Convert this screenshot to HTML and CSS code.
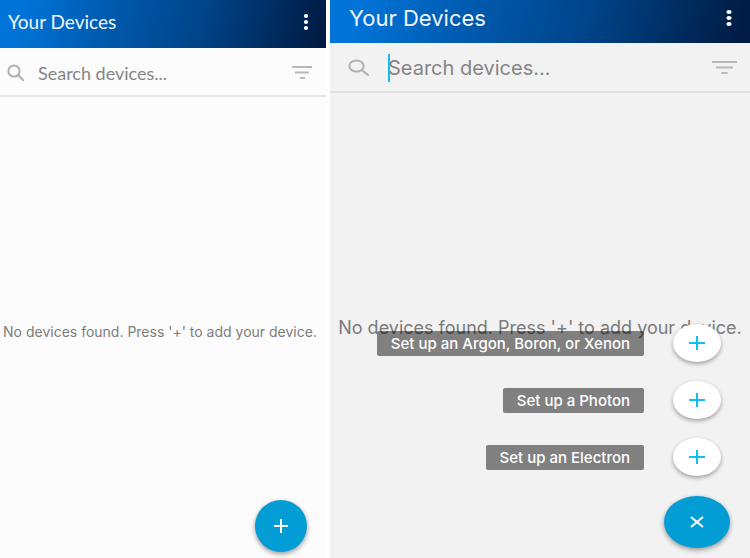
FILE: index.html
```html
<!DOCTYPE html>
<html lang="en">
<head>
<meta charset="utf-8">
<title>Your Devices</title>
<link rel="stylesheet" href="styles.css">
</head>
<body>
<main class="screens">
  <section class="screen">
    <header class="bar">
      <h1 class="title">Your Devices</h1>
      <button class="icon-button" aria-label="More options"><svg width="6" height="18" viewBox="0 0 6 18" fill="#fff"><circle cx="3" cy="3" r="2.1"/><circle cx="3" cy="9" r="2.1"/><circle cx="3" cy="15" r="2.1"/></svg></button>
    </header>
    <div class="search">
      <svg class="glass" width="18" height="18" viewBox="0 0 18 18" fill="none" stroke="#b0b0b0" stroke-width="2"><circle cx="7" cy="7" r="5.6"/><path d="M11 11l5.800 5.800"/></svg>
      <div class="field"><input type="text" placeholder="Search devices..." aria-label="Search devices"></div>
      <button class="icon-button" aria-label="Filter"><svg width="20" height="14" viewBox="0 0 20 14" fill="#b8b8b8"><path d="M0 0h20v2H0zM3 5.500h14v2H3zM8 11h5v2H8z"/></svg></button>
    </div>
    <p class="empty">No devices found. Press '+' to add your device.</p>
    <button class="fab" aria-label="Add device"><svg width="14" height="14" viewBox="0 0 14 14" stroke="#fff" stroke-width="2"><path d="M7 0v14M0 7h14"/></svg></button>
  </section>

  <section class="screen wide">
    <header class="bar">
      <h1 class="title">Your Devices</h1>
      <button class="icon-button" aria-label="More options"><svg width="6" height="16" viewBox="0 0 6 16" fill="#fff"><ellipse cx="3" cy="2" rx="2.600" ry="1.900"/><ellipse cx="3" cy="8" rx="2.600" ry="1.900"/><ellipse cx="3" cy="14" rx="2.600" ry="1.900"/></svg></button>
    </header>
    <div class="search">
      <svg class="glass" width="22" height="18" viewBox="0 0 22 18" fill="none" stroke="#b0b0b0" stroke-width="2"><ellipse cx="8.500" cy="7" rx="7.200" ry="5.600"/><path d="M13.500 11l7.300 5.500"/></svg>
      <div class="field"><input type="text" placeholder="Search devices..." aria-label="Search devices"><span class="caret"></span></div>
      <button class="icon-button" aria-label="Filter"><svg width="25" height="14" viewBox="0 0 25 14" fill="#b8b8b8"><path d="M0 0h25v2H0zM4 5.500h17v2H4zM9.500 11h6v2h-6z"/></svg></button>
    </div>
    <p class="empty">No devices found. Press '+' to add your device.</p>
    <div class="menu">
      <button class="option"><span class="label">Set up an Argon, Boron, or Xenon</span><span class="mini"><svg width="16" height="14" viewBox="0 0 16 14" stroke="#12bdf2" stroke-width="2"><path d="M8 0v14M0 7h16"/></svg></span></button>
      <button class="option"><span class="label">Set up a Photon</span><span class="mini"><svg width="16" height="14" viewBox="0 0 16 14" stroke="#12bdf2" stroke-width="2"><path d="M8 0v14M0 7h16"/></svg></span></button>
      <button class="option"><span class="label">Set up an Electron</span><span class="mini"><svg width="16" height="14" viewBox="0 0 16 14" stroke="#12bdf2" stroke-width="2"><path d="M8 0v14M0 7h16"/></svg></span></button>
    </div>
    <button class="fab" aria-label="Close menu"><svg width="14" height="12" viewBox="0 0 14 12" stroke="#fff" stroke-width="2"><path d="M1 1l12 10M13 1L1 11"/></svg></button>
  </section>
</main>
</body>
</html>
```
FILE: styles.css
```css
* { box-sizing: border-box; }
body { margin: 0; background: #fff; font-family: Lato, "Liberation Sans", sans-serif; }
button { display: flex; align-items: center; padding: 0; border: 0; background: none; font: inherit; cursor: pointer; }
svg { display: block; flex: none; }

.screens { display: grid; grid-template-columns: 326fr 420fr; gap: 4px; min-height: 100vh; }
.screen { position: relative; display: flex; flex-direction: column; min-width: 0; overflow: hidden; background: #fcfcfc; }

.bar { display: flex; align-items: center; justify-content: space-between; height: 48px; padding: 0 17px 4px 8px; background: linear-gradient(105deg, #0074d8 7%, #005bb0 32%, #00458b 60%, #001c45 97%); }
.title { margin: 0; color: #f0f5fb; font-size: 19px; font-weight: 400; line-height: 24px; }

.search { display: flex; align-items: center; height: 49px; padding: 2px 14px 0 7px; border-bottom: 2px solid #e6e6e6; }
.glass { margin-right: 13px; }
.field { position: relative; flex: 1; min-width: 0; }
.field input { display: block; width: 100%; height: 28px; padding: 0; border: 0; outline: 0; background: none; color: #555; font: inherit; font-size: 18px; }
.field input::placeholder { color: #858585; opacity: 1; }
.caret { position: absolute; top: 0; left: 0; width: 2px; height: 28px; background: #12bdf2; }

.empty { display: flex; flex: 1; align-items: center; justify-content: center; margin: 0; padding: 9px 6px 0 0; color: #7c7c7c; font-family: Inter, "Liberation Sans", sans-serif; font-size: 14px; line-height: 20px; white-space: nowrap; }

.fab { position: absolute; right: 19px; bottom: 6px; justify-content: center; width: 52px; height: 52px; border-radius: 50%; background: #039dd6; box-shadow: 0 2px 5px rgba(0, 0, 0, .4); }

.wide { background: #f2f2f2; font-family: Inter, "Liberation Sans", sans-serif; }
.wide .bar { height: 43px; padding: 0 18px 8px 19px; }
.wide .title { font-size: 22px; }
.wide .search { height: 50px; padding: 1px 13px 0 18px; border-color: #e0e0e0; }
.wide .glass { margin-right: 18px; }
.wide .field input { font-size: 20px; }
.wide .empty { padding: 5px 0 0; font-size: 18px; }
.wide .fab { right: 20px; bottom: 10px; width: 66px; }

.menu { position: absolute; right: 29px; bottom: 82px; display: flex; flex-direction: column; align-items: flex-end; gap: 19px; }
.option { gap: 29px; }
.label { padding: 0 14px; border-radius: 2px; background: rgba(0, 0, 0, .47); color: #fff; font-size: 15px; font-weight: 500; line-height: 25px; }
.mini { display: flex; align-items: center; justify-content: center; width: 48px; height: 38px; border-radius: 50%; background: #fff; box-shadow: 0 2px 4px rgba(0, 0, 0, .35); }
```
